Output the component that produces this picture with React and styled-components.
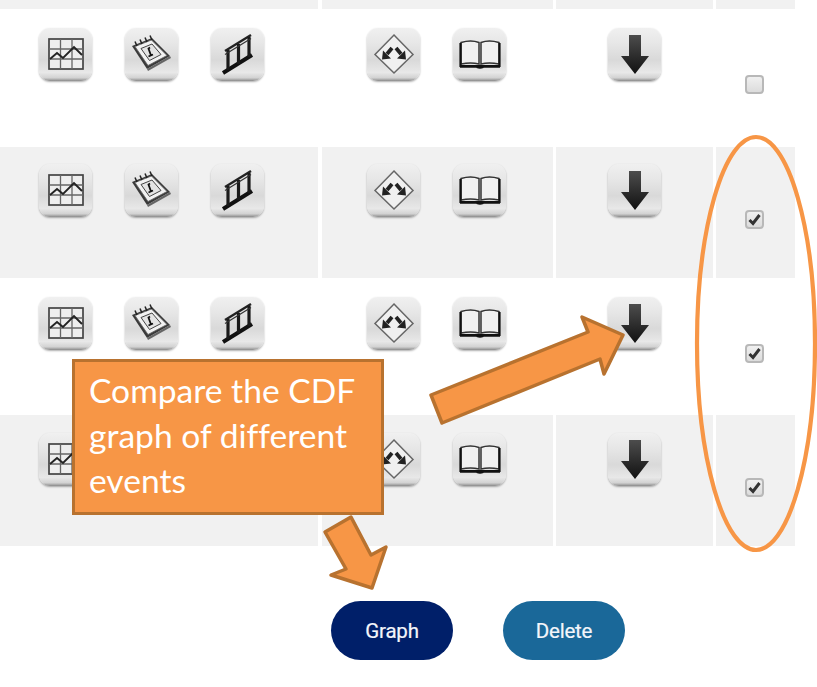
import React from "react";
import styled, { createGlobalStyle } from "styled-components";

const GlobalStyle = createGlobalStyle`
  html, body {
    margin: 0;
    padding: 0;
    background: #fff;
    font-family: "Liberation Sans", Arial, sans-serif;
  }
`;

const Page = styled.div`
  position: relative;
  width: 817px;
  height: 687px;
  overflow: hidden;
  background: #fff;
`;
const Row = styled.div`
  display: grid;
  grid-template-columns: 318px 231px 156.5px 79px;
  column-gap: 3.5px;
  height: ${(p) => p.$h}px;
`;
const Cell = styled.div`
  display: flex;
  align-items: flex-start;
  gap: 33px;
  box-sizing: border-box;
  padding: ${(p) => p.$top || 0}px 0 0 ${(p) => p.$left || 0}px;
  background: ${(p) => (p.$shaded ? "#f1f1f1" : "#fff")};
`;
const CheckCell = styled.div`
  display: flex;
  align-items: center;
  justify-content: center;
  box-sizing: border-box;
  padding: 13px 3px 0 0;
  background: ${(p) => (p.$shaded ? "#f1f1f1" : "#fff")};
`;
const Tile = styled.div`
  width: 53px;
  height: 53px;
  flex: none;
  border-radius: 11px;
  background: linear-gradient(#f0f0f0 0%, #e7e7e7 28%, #d9d9d9 60%, #e8e8e8 84%, #d2d2d2 94%, #8a8a8a 100%);
  box-shadow: 0 1px 2px rgba(0, 0, 0, 0.32);
  & svg {
    display: block;
    width: 53px;
    height: 53px;
    filter: blur(0.45px);
  }
`;
const Box = styled.div`
  width: 15px;
  height: 15px;
  border: 2px solid #b8b8b8;
  border-radius: 4px;
  background: linear-gradient(#f0f0f0, #dcdcdc);
  & svg {
    display: block;
    width: 15px;
    height: 15px;
  }
`;
const Actions = styled.div`
  display: flex;
  gap: 50px;
  margin-top: 55px;
  padding-left: 331px;
`;
const PillButton = styled.button`
  width: 122px;
  height: 59px;
  padding: 0;
  border: none;
  border-radius: 30px;
  background: ${(p) => p.$color};
  color: #f4f6fb;
  font-family: Roboto, "Liberation Sans", sans-serif;
  font-size: 20.5px;
  letter-spacing: -0.2px;
  -webkit-text-stroke: 0.2px #f4f6fb;
`;
const Callout = styled.div`
  position: absolute;
  left: 72px;
  top: 359px;
  width: 312px;
  height: 156px;
  box-sizing: border-box;
  padding: 6px 10px 0 14px;
  border: 3px solid #b8722f;
  background: #f79646;
  color: #fff;
  font-family: Lato, "Open Sans", sans-serif;
  font-size: 33.6px;
  line-height: 45px;
  font-variant-ligatures: none;
`;
const Overlay = styled.svg`
  position: absolute;
  left: 0;
  top: 0;
  width: 817px;
  height: 687px;
  pointer-events: none;
`;

const ChartIcon = () => (
  <svg viewBox="0 0 53 53">
    <rect x="10" y="11" width="34" height="30" fill="#eee" stroke="#444" strokeWidth="1.7" />
    <path d="M21.5 11v30M33 11v30M10 21h34M10 31h34" stroke="#666" strokeWidth="1.3" fill="none" />
    <path d="M11 31l7-6 6 5 11-11 8 8" stroke="#222" strokeWidth="1.9" fill="none" />
  </svg>
);
const CalendarIcon = () => (
  <svg viewBox="0 0 53 53">
    <path d="M7 18L27 10 45 28 22 41z" fill="#3a3a3a" />
    <path d="M10 18.500L26.500 12 42 27.500 23 37.500z" fill="#f2f2f2" stroke="#666" strokeWidth="0.8" />
    <path d="M16 20.500L27 16 36 26.500 24.500 32.500z" fill="#e4e4e4" stroke="#444" strokeWidth="1" />
    <path d="M10 13.500l2 4.500M15 11.500l2 4.500M20 9.500l2 4.500M25 7.500l2 4.500" stroke="#222" strokeWidth="1.500" fill="none" />
    <path d="M25 19.500l-1.500 1 2.500 7M23.500 28.500l4.500-2" stroke="#111" strokeWidth="1.800" fill="none" />
    <path d="M22 41L45 28 46 30 23 43z" fill="#666" />
  </svg>
);
const LadderIcon = () => (
  <svg viewBox="0 0 53 53">
    <path d="M14 23L40 7" stroke="#222" strokeWidth="2.400" fill="none" />
    <path d="M12 45L41 27" stroke="#111" strokeWidth="4" fill="none" />
    <path d="M17 22V42" stroke="#1a1a1a" strokeWidth="3.200" fill="none" />
    <path d="M27.500 16V36" stroke="#1a1a1a" strokeWidth="3.200" fill="none" />
    <path d="M38 9V29" stroke="#1a1a1a" strokeWidth="3.200" fill="none" />
    <path d="M14 26.500L40 10.500" stroke="#333" strokeWidth="1.200" fill="none" />
  </svg>
);
const DiamondIcon = () => (
  <svg viewBox="0 0 53 53">
    <path d="M27 7L46 26.500 27 45 8 26.500z" fill="#f0f0f0" stroke="#666" strokeWidth="1.500" />
    <path d="M25 20l-5 6" stroke="#222" strokeWidth="3.800" />
    <path d="M15 31.500l1-9 8 8z" fill="#222" />
    <path d="M29 20l5 6" stroke="#222" strokeWidth="3.800" />
    <path d="M39 31.500l-1-9-8 8z" fill="#222" />
  </svg>
);
const BookIcon = () => (
  <svg viewBox="0 0 53 53">
    <path d="M8 14.500Q18 11.500 26 14.500V36Q18 34 8 36zM46 14.500Q36 11.500 28 14.500V36Q36 34 46 36z" fill="#f0f0f0" stroke="#333" strokeWidth="1.500" />
    <path d="M7.500 15v23h39V15" fill="none" stroke="#111" strokeWidth="2.200" />
    <path d="M7 38.500h40" stroke="#111" strokeWidth="2.400" />
    <path d="M23.500 38.500h7v1.500q-3.500 1.500-7 0z" fill="#111" />
  </svg>
);
const DownIcon = () => (
  <svg viewBox="0 0 53 53">
    <defs>
      <linearGradient id="downFill" x1="0" y1="0" x2="0" y2="1">
        <stop offset="0" stopColor="#4d4d4d" />
        <stop offset="1" stopColor="#111" />
      </linearGradient>
    </defs>
    <path d="M21 7h12v21h8L27 46 13 28h8z" fill="url(#downFill)" />
  </svg>
);

const CheckBox = ({ checked }) => (
  <Box>
    {checked && (
      <svg viewBox="0 0 15 15">
        <path d="M2.500 8l3.500 3.500 6.500-8.500" fill="none" stroke="#333" strokeWidth="3" />
      </svg>
    )}
  </Box>
);

const rows = [
  { h: 138, top: 19, shaded: false, checked: false },
  { h: 131, top: 17, shaded: true, checked: true },
  { h: 137, top: 19, shaded: false, checked: true },
  { h: 131, top: 18, shaded: true, checked: true },
];

export default function App() {
  return (
    <Page>
      <GlobalStyle />
      <Row $h={9}>
        <Cell $shaded />
        <Cell $shaded />
        <Cell $shaded />
        <Cell $shaded />
      </Row>
      {rows.map((r, i) => (
        <Row key={i} $h={r.h}>
          <Cell $shaded={r.shaded} $left={39} $top={r.top}>
            <Tile><ChartIcon /></Tile>
            <Tile><CalendarIcon /></Tile>
            <Tile><LadderIcon /></Tile>
          </Cell>
          <Cell $shaded={r.shaded} $left={45} $top={r.top}>
            <Tile><DiamondIcon /></Tile>
            <Tile><BookIcon /></Tile>
          </Cell>
          <Cell $shaded={r.shaded} $left={52} $top={r.top}>
            <Tile><DownIcon /></Tile>
          </Cell>
          <CheckCell $shaded={r.shaded}>
            <CheckBox checked={r.checked} />
          </CheckCell>
        </Row>
      ))}
      <Actions>
        <PillButton $color="#001f69">Graph</PillButton>
        <PillButton $color="#1a6899">Delete</PillButton>
      </Actions>

      <Overlay viewBox="0 0 817 687">
        <ellipse cx="756" cy="343.500" rx="59" ry="206.500" fill="none" stroke="#f79646" strokeWidth="4.200" />
        <path
          d="M623 335L582 317 588 332 431 395 442 423 600 359 604 374z"
          fill="#f79646"
          stroke="#b8722f"
          strokeWidth="3.500"
          strokeLinejoin="round"
        />
        <path
          d="M325 532L351 517 371 555 386 547 372 588 331 575 346 569z"
          fill="#f79646"
          stroke="#b8722f"
          strokeWidth="3.500"
          strokeLinejoin="round"
        />
      </Overlay>
      <Callout>Compare the CDF graph of different events</Callout>
    </Page>
  );
}
